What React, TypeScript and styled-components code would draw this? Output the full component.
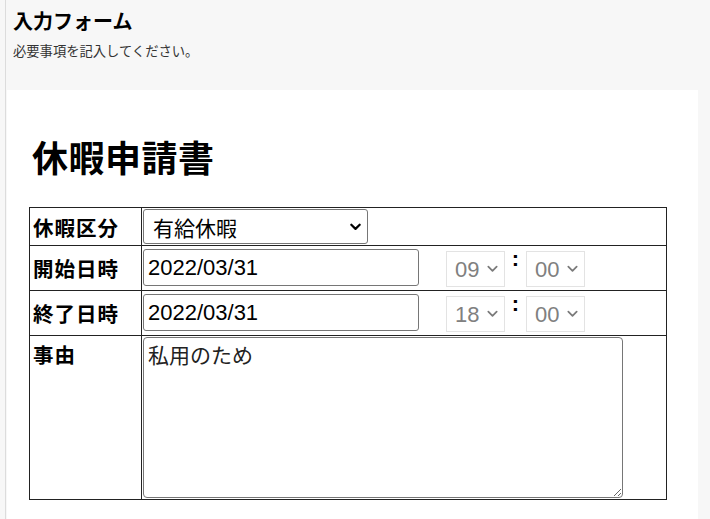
import React from "react";
import styled, { createGlobalStyle } from "styled-components";

const GlobalStyle = createGlobalStyle`
  html, body {
    margin: 0;
    padding: 0;
    background: #f7f7f7;
    font-family: "Noto Sans CJK JP", "Noto Sans", sans-serif;
    color: #000;
  }
`;

const Shell = styled.div`
  margin-left: 5px;
  border-left: 1px solid #dcdcdc;
  min-height: 519px;
  box-sizing: border-box;
`;

const Header = styled.header`
  height: 90px;
  padding: 8px 7px 0;
  box-sizing: border-box;
`;

const PageTitle = styled.h2`
  margin: 0;
  font-size: 20px;
  line-height: 26px;
  font-weight: 700;
`;

const PageLead = styled.p`
  margin: 8px 0 0;
  font-size: 13.3px;
  line-height: 18px;
  color: #333;
`;

const Card = styled.main`
  margin: 0 12px 0 1px;
  background: #fff;
  padding: 44px 0 20px 22px;
  min-height: 429px;
  box-sizing: border-box;
`;

const FormTitle = styled.h1`
  margin: 0 0 29px 3px;
  font-size: 36px;
  line-height: 44px;
  font-weight: 700;
  letter-spacing: 0.5px;
`;

const Table = styled.table`
  border-collapse: collapse;
  width: 638px;
  table-layout: fixed;
`;

const Label = styled.th<{ $top?: boolean }>`
  width: 110px;
  border: 1px solid #222;
  padding: 1px 3px;
  text-align: left;
  vertical-align: ${(p) => (p.$top ? "top" : "middle")};
  font-size: 20.5px;
  line-height: 26px;
  font-weight: 700;
  letter-spacing: 1px;
  ${(p) => (p.$top ? "padding-top: 5px;" : "")}
`;

const Cell = styled.td`
  border: 1px solid #222;
  padding: 1px;
  vertical-align: middle;
`;

const Line = styled.div`
  display: flex;
  align-items: flex-start;
`;

const KindSelect = styled.select`
  appearance: none;
  width: 225px;
  height: 35px;
  box-sizing: border-box;
  border: 1px solid #767676;
  border-radius: 3px;
  background: #fff;
  padding: 0 0 0 9px;
  font-family: "Noto Sans CJK JP", sans-serif;
  font-size: 21px;
  color: #000;
`;

const SelectWrap = styled.div`
  position: relative;
  display: inline-flex;
`;

const Chevron = styled.svg`
  position: absolute;
  right: 7px;
  top: 50%;
  transform: translateY(-50%);
  pointer-events: none;
`;

const DateInput = styled.input`
  width: 276px;
  height: 37px;
  box-sizing: border-box;
  margin: 2px 0 3px;
  border: 1px solid #767676;
  border-radius: 3px;
  padding: 0 4px;
  font-family: "Liberation Sans", Arial, sans-serif;
  font-size: 22px;
  color: #000;
  background: #fff;
`;

const TimeSelect = styled.select`
  appearance: none;
  width: 59px;
  height: 36px;
  box-sizing: border-box;
  border: 1px solid #e3e3e3;
  border-radius: 0;
  background: #fff;
  padding: 0 0 0 8px;
  font-family: "Liberation Sans", Arial, sans-serif;
  font-size: 22px;
  color: #808080;
  opacity: 1;
`;

const TimeGroup = styled.div`
  display: flex;
  align-items: flex-start;
  margin: 4px 0 0 27px;
`;

const Colon = styled.span`
  width: 21px;
  text-align: center;
  font-family: "Liberation Sans", Arial, sans-serif;
  font-weight: 700;
  font-size: 22px;
  line-height: 16px;
`;

const Reason = styled.textarea`
  display: block;
  width: 480px;
  height: 161px;
  box-sizing: border-box;
  margin: 0;
  border: 1px solid #767676;
  border-radius: 4px;
  padding: 1px 4px;
  font-family: "Noto Sans CJK JP", sans-serif;
  font-size: 21px;
  line-height: 30px;
  color: #222;
  resize: both;
`;

const ChevronIcon = ({ muted }: { muted?: boolean }) => (
  <Chevron width={11} height={8} viewBox="0 0 10 7">
    <path
      d="M1.2 1.4 L5 5.2 L8.8 1.4"
      fill="none"
      stroke={muted ? "#7a7a7a" : "#000"}
      strokeWidth={muted ? 1.6 : 2}
      strokeLinecap="round"
      strokeLinejoin="round"
    />
  </Chevron>
);

const hours = Array.from({ length: 24 }, (_, i) => String(i).padStart(2, "0"));
const minutes = ["00", "15", "30", "45"];

const TimePicker = ({ hour }: { hour: string }) => (
  <TimeGroup>
    <SelectWrap>
      <TimeSelect disabled defaultValue={hour}>
        {hours.map((h) => (
          <option key={h} value={h}>
            {h}
          </option>
        ))}
      </TimeSelect>
      <ChevronIcon muted />
    </SelectWrap>
    <Colon>:</Colon>
    <SelectWrap>
      <TimeSelect disabled defaultValue="00">
        {minutes.map((m) => (
          <option key={m} value={m}>
            {m}
          </option>
        ))}
      </TimeSelect>
      <ChevronIcon muted />
    </SelectWrap>
  </TimeGroup>
);

export default function App() {
  return (
    <>
      <GlobalStyle />
      <Shell>
        <Header>
          <PageTitle>入力フォーム</PageTitle>
          <PageLead>必要事項を記入してください。</PageLead>
        </Header>
        <Card>
          <FormTitle>休暇申請書</FormTitle>
          <Table>
            <colgroup>
              <col style={{ width: 112 }} />
              <col />
            </colgroup>
            <tbody>
              <tr>
                <Label>休暇区分</Label>
                <Cell>
                  <SelectWrap>
                    <KindSelect defaultValue="有給休暇">
                      <option>有給休暇</option>
                      <option>特別休暇</option>
                      <option>代休</option>
                    </KindSelect>
                    <ChevronIcon />
                  </SelectWrap>
                </Cell>
              </tr>
              <tr>
                <Label>開始日時</Label>
                <Cell>
                  <Line>
                    <DateInput type="text" defaultValue="2022/03/31" />
                    <TimePicker hour="09" />
                  </Line>
                </Cell>
              </tr>
              <tr>
                <Label>終了日時</Label>
                <Cell>
                  <Line>
                    <DateInput type="text" defaultValue="2022/03/31" />
                    <TimePicker hour="18" />
                  </Line>
                </Cell>
              </tr>
              <tr>
                <Label $top>事由</Label>
                <Cell>
                  <Reason defaultValue="私用のため" />
                </Cell>
              </tr>
            </tbody>
          </Table>
        </Card>
      </Shell>
    </>
  );
}
